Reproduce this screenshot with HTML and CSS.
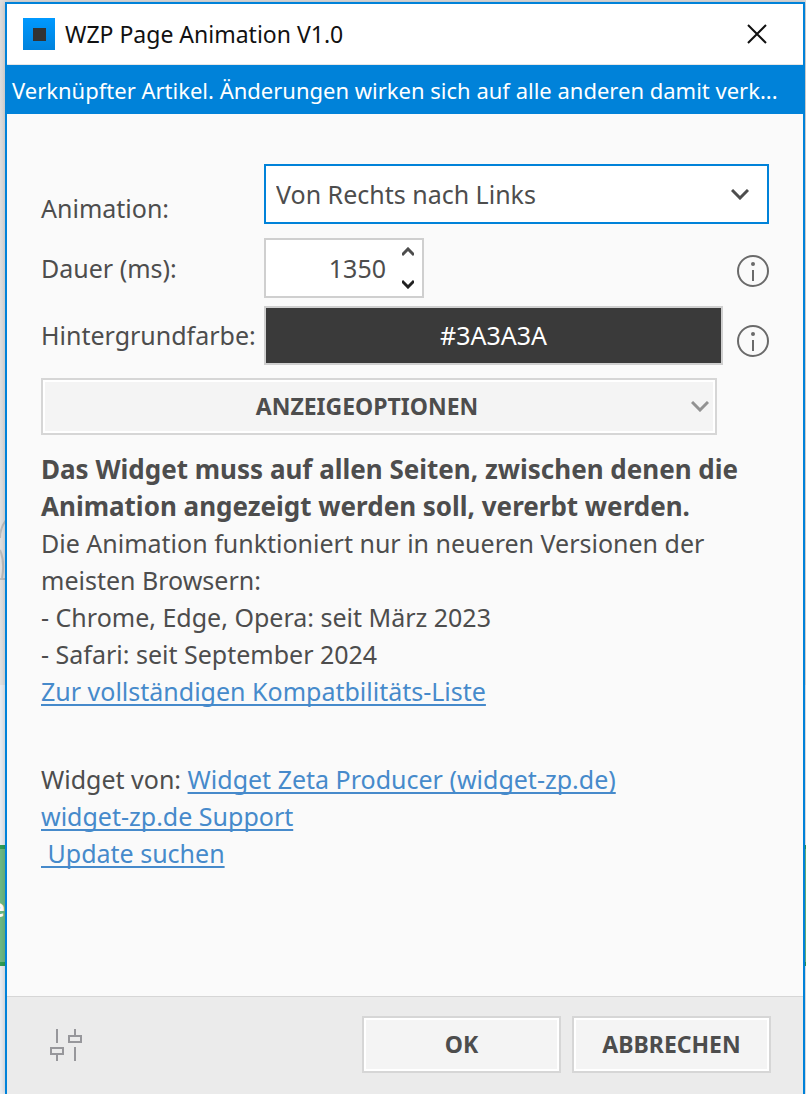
FILE: index.html
```html
<!DOCTYPE html>
<html lang="de">
<head>
<meta charset="utf-8">
<meta name="viewport" content="width=device-width, initial-scale=1">
<title>WZP Page Animation V1.0</title>
<link rel="stylesheet" href="styles.css">
</head>
<body>
<div class="backdrop" aria-hidden="true">
  <svg class="backdrop-sketch" viewBox="0 0 6 190"><path d="M6 20Q0 28 0 38M0 50Q5 62 2 78M0 79H6" /></svg>
  <div class="backdrop-banner"><span>e</span></div>
</div>
<main class="dialog" role="dialog" aria-labelledby="dialog-title">
  <header class="titlebar">
    <svg class="app-icon" viewBox="0 0 32 32" aria-hidden="true">
      <defs><linearGradient id="tile" x2="0" y2="1"><stop stop-color="#0099ff"/><stop offset="1" stop-color="#0082dc"/></linearGradient></defs>
      <path fill="url(#tile)" d="M0 0h32v32H0z"/><path fill="#333" d="M10 10h13v13H10z"/>
    </svg>
    <h1 class="title" id="dialog-title">WZP Page Animation V1.0</h1>
    <button class="close" type="button" aria-label="Schließen">
      <svg viewBox="0 0 20 20"><path d="M1 1l18 18M19 1L1 19"/></svg>
    </button>
  </header>
  <p class="notice">Verknüpfter Artikel. Änderungen wirken sich auf alle anderen damit verk...</p>

  <form class="content" id="settings">
    <div class="field field-animation">
      <label for="animation">Animation:</label>
      <div class="select-wrap">
        <select id="animation"><option>Von Rechts nach Links</option></select>
        <svg class="chevron" viewBox="0 0 18 11" aria-hidden="true"><path d="M1 1l8 8 8-8"/></svg>
      </div>
    </div>
    <div class="field field-duration">
      <label for="duration">Dauer (ms):</label>
      <div class="spinner">
        <input id="duration" type="text" inputmode="numeric" value="1350">
        <div class="steps">
          <button type="button" aria-label="Erhöhen"><svg viewBox="0 0 12 10"><path d="M0 8l6-6 6 6"/></svg></button>
          <button type="button" aria-label="Verringern"><svg class="step-down" viewBox="0 0 12 10"><path d="M0 2l6 6 6-6"/></svg></button>
        </div>
      </div>
      <button class="info" type="button" aria-label="Info zur Dauer">
        <svg viewBox="0 0 32 32"><circle cx="16" cy="16" r="15"/><path d="M16 15v11"/><circle class="dot" cx="16" cy="9" r="2"/></svg>
      </button>
    </div>
    <div class="field field-color">
      <label for="color">Hintergrundfarbe:</label>
      <button class="swatch" id="color" type="button">#3A3A3A</button>
      <button class="info" type="button" aria-label="Info zur Hintergrundfarbe">
        <svg viewBox="0 0 32 32"><circle cx="16" cy="16" r="15"/><path d="M16 15v11"/><circle class="dot" cx="16" cy="9" r="2"/></svg>
      </button>
    </div>
    <button class="button options" type="button">
      <span>ANZEIGEOPTIONEN</span>
      <svg class="chevron" viewBox="0 0 18 11" aria-hidden="true"><path d="M1 1l8 8 8-8"/></svg>
    </button>
    <div class="description">
      <p class="lead"><strong>Das Widget muss auf allen Seiten, zwischen denen die<br>Animation angezeigt werden soll, vererbt werden.</strong></p>
      <p>Die Animation funktioniert nur in neueren Versionen der<br>meisten Browsern:</p>
      <p>- Chrome, Edge, Opera: seit März 2023</p>
      <p>- Safari: seit September 2024</p>
      <p><a href="#liste">Zur vollständigen Kompatbilitäts-Liste</a></p>
    </div>
    <div class="credits">
      <p>Widget von: <a href="#widget">Widget Zeta Producer (widget-zp.de)</a></p>
      <p><a href="#support">widget-zp.de Support</a></p>
      <p><a href="#update">&nbsp;Update suchen</a></p>
    </div>
  </form>

  <footer class="footer">
    <button class="adjust" type="button" aria-label="Einstellungen">
      <svg viewBox="0 0 32 32"><path d="M7 0v14M7 26v6M1 19h12v6H1zM25 0v6M25 18v14M19 7h12v6H19z"/></svg>
    </button>
    <button class="button action" type="submit" form="settings">OK</button>
    <button class="button action" type="button">ABBRECHEN</button>
  </footer>
</main>
</body>
</html>
```
FILE: styles.css
```css
* { box-sizing: border-box; }

body {
  margin: 0;
  background: linear-gradient(#dedede 0, #e2e2e2 685px, #e9edf2 685px);
  color: #4d4d4d;
  font: 25px/37px "Noto Sans", "Open Sans", sans-serif;
}

p, h1 { margin: 0; }

button, input, select {
  margin: 0;
  padding: 0;
  border: 0;
  border-radius: 0;
  background: none;
  color: inherit;
  font: inherit;
}

svg {
  display: block;
  fill: none;
  stroke: currentColor;
  stroke-width: 2;
}

.backdrop {
  position: absolute;
  inset: 0;
  overflow: hidden;
}

.backdrop-sketch {
  position: absolute;
  top: 500px;
  left: 0;
  width: 6px;
  color: #bdbdbd;
}

.backdrop-banner {
  position: absolute;
  top: 845px;
  right: 0;
  left: 0;
  height: 121px;
  border: solid #2f9e57;
  border-width: 4px 0;
  background: #6dba84;
  color: #fff;
}

.backdrop-banner span {
  position: absolute;
  top: 40px;
  left: -10px;
  font-weight: 700;
}

.dialog {
  position: relative;
  display: flex;
  flex-direction: column;
  min-height: calc(100vh - 2px);
  margin: 2px 1px 0 5px;
  border: 2px solid #0082d9;
  border-bottom: 0;
  background: #fafafa;
  box-shadow: 0 0 6px #0003;
}

.titlebar {
  display: flex;
  align-items: center;
  gap: 10px;
  height: 61px;
  padding: 0 36px 0 16px;
  border-bottom: 1px solid #e6e6e6;
  background: #fff;
  color: #111;
}

.app-icon {
  width: 32px;
  height: 32px;
  stroke: none;
}

.title {
  flex: 1;
  font-size: 23px;
  font-weight: 400;
}

.close svg { width: 20px; height: 20px; }

.notice {
  overflow: hidden;
  padding: 7px 5px 5px;
  background: #0082d9;
  color: #fff;
  font-size: 22px;
  text-overflow: ellipsis;
  white-space: nowrap;
}

.content {
  flex: 1;
  padding: 50px 34px 0;
}

.field {
  display: grid;
  grid-template-columns: 213px 1fr 32px;
  column-gap: 10px;
  align-items: center;
  min-height: 60px;
}

.field label { white-space: nowrap; }

.field-animation label {
  align-self: end;
  line-height: 32px;
}

.field-duration { margin-top: 14px; }

.field-color { margin-top: 7px; }

.select-wrap {
  position: relative;
  grid-column: 2 / -1;
}

.select-wrap select {
  display: block;
  width: 100%;
  height: 60px;
  padding: 0 48px 0 10px;
  border: 2px solid #0082d9;
  outline: 0;
  appearance: none;
  background: #fff;
}

.chevron {
  position: absolute;
  top: 25px;
  right: 20px;
  width: 18px;
  height: 11px;
  stroke-width: 3;
  pointer-events: none;
}

.spinner {
  display: flex;
  width: 160px;
  height: 60px;
  border: 2px solid #cfcfcf;
  background: #fff;
}

.spinner input {
  flex: 1;
  min-width: 0;
  outline: 0;
  text-align: right;
}

.steps {
  display: flex;
  flex-direction: column;
  justify-content: space-between;
  width: 36px;
  padding: 7px 8px 7px 16px;
}

.steps svg {
  width: 12px;
  height: 10px;
  stroke-width: 3;
}

.steps .step-down { color: #222; }

.info {
  padding-top: 6px;
  color: #6a6a6a;
}

.field-color .info { padding-top: 12px; }

.info svg { width: 32px; height: 32px; }

.info .dot {
  fill: currentColor;
  stroke: none;
}

.swatch {
  height: 59px;
  margin-right: 4px;
  border: 2px solid #cfcfcf;
  background: #3a3a3a;
  color: #fff;
}

.button {
  height: 57px;
  border: 2px solid #d6d6d6;
  background: #f4f4f4;
  box-shadow: inset 0 0 0 2px #fff;
  font-size: 23px;
  font-weight: 700;
}

.options {
  position: relative;
  display: block;
  width: calc(100% - 52px);
  margin-top: 13px;
  padding-right: 24px;
}

.options .chevron {
  top: 21px;
  right: 6px;
  color: #929292;
}

.description { margin-top: 16px; }

.lead { font-size: 26px; }

.credits { margin-top: 51px; }

a {
  color: #468acb;
  text-decoration-thickness: 2px;
  text-decoration-skip-ink: none;
  text-underline-offset: 3px;
}

.footer {
  display: flex;
  gap: 11px;
  align-items: center;
  padding: 19px 32px 21px 43px;
  border-top: 1px solid #d6d6d6;
  background: #ebebeb;
}

.adjust {
  margin-right: auto;
  color: #97979b;
}

.adjust svg { width: 32px; height: 32px; }

.action { width: 199px; }
```
